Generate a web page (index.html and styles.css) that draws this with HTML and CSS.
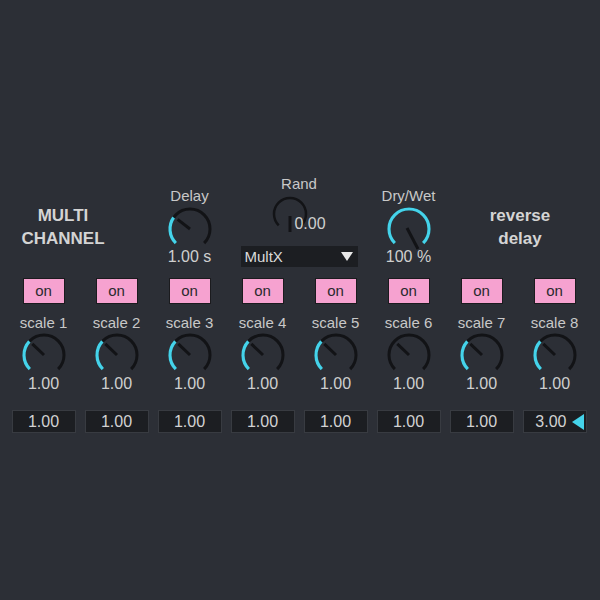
FILE: index.html
```html
<!DOCTYPE html>
<html>
<head>
	<meta charset="UTF-8">
	<title>Multi Channel Reverse Delay</title>
	<link rel="stylesheet" href="styles.css">
</head>
<body>
	<div id="device">
		<div class="top">
			<div class="title multi">MULTI<br>CHANNEL</div>
			<div class="ctl">
				<span class="lbl">Delay</span>
				<svg class="knob" width="46" height="46" viewBox="0 0 46 46">
					<path class="track" d="M8.86 37.14 A20 20 0 1 1 37.14 37.14"/>
					<path class="val" d="M8.86 37.14 A20 20 0 0 1 6.62 11.53"/>
					<line class="needle" x1="23" y1="23" x2="10.6" y2="13.4"/>
				</svg>
				<span class="num">1.00 s</span>
			</div>
			<div class="rand">
				<span class="lbl">Rand</span>
				<div class="randrow">
					<svg class="small" width="36" height="36" viewBox="0 0 36 36">
						<path class="track thin" d="M6.7 29.3 A16 16 0 1 1 29.3 29.3"/>
						<line class="needle" x1="18" y1="20" x2="18" y2="36"/>
					</svg>
					<span class="num">0.00</span>
				</div>
				<div class="menu"><span>MultX</span><i class="down"></i></div>
			</div>
			<div class="ctl">
				<span class="lbl">Dry/Wet</span>
				<svg class="knob" width="46" height="46" viewBox="0 0 46 46">
					<path class="track" d="M8.86 37.14 A20 20 0 1 1 37.14 37.14"/>
					<path class="val" d="M8.86 37.14 A20 20 0 1 1 37.14 37.14"/>
					<line class="needle" x1="21" y1="22" x2="32" y2="43"/>
				</svg>
				<span class="num">100 %</span>
			</div>
			<div class="title reverse">reverse<br>delay</div>
		</div>

		<div class="channels">
			<div class="ch">
				<span class="btn">on</span>
				<span class="lbl">scale 1</span>
				<svg class="knob" width="46" height="46" viewBox="0 0 46 46">
					<path class="track" d="M8.86 37.14 A20 20 0 1 1 37.14 37.14"/>
					<path class="val" d="M8.86 37.14 A20 20 0 0 1 8.36 9.36"/>
					<line class="needle" x1="23" y1="23" x2="11.3" y2="11.9"/>
				</svg>
				<span class="num">1.00</span>
				<span class="box">1.00</span>
			</div>
			<div class="ch">
				<span class="btn">on</span>
				<span class="lbl">scale 2</span>
				<svg class="knob" width="46" height="46" viewBox="0 0 46 46">
					<path class="track" d="M8.86 37.14 A20 20 0 1 1 37.14 37.14"/>
					<path class="val" d="M8.86 37.14 A20 20 0 0 1 8.36 9.36"/>
					<line class="needle" x1="23" y1="23" x2="11.3" y2="11.9"/>
				</svg>
				<span class="num">1.00</span>
				<span class="box">1.00</span>
			</div>
			<div class="ch">
				<span class="btn">on</span>
				<span class="lbl">scale 3</span>
				<svg class="knob" width="46" height="46" viewBox="0 0 46 46">
					<path class="track" d="M8.86 37.14 A20 20 0 1 1 37.14 37.14"/>
					<path class="val" d="M8.86 37.14 A20 20 0 0 1 8.36 9.36"/>
					<line class="needle" x1="23" y1="23" x2="11.3" y2="11.9"/>
				</svg>
				<span class="num">1.00</span>
				<span class="box">1.00</span>
			</div>
			<div class="ch">
				<span class="btn">on</span>
				<span class="lbl">scale 4</span>
				<svg class="knob" width="46" height="46" viewBox="0 0 46 46">
					<path class="track" d="M8.86 37.14 A20 20 0 1 1 37.14 37.14"/>
					<path class="val" d="M8.86 37.14 A20 20 0 0 1 8.36 9.36"/>
					<line class="needle" x1="23" y1="23" x2="11.3" y2="11.9"/>
				</svg>
				<span class="num">1.00</span>
				<span class="box">1.00</span>
			</div>
			<div class="ch">
				<span class="btn">on</span>
				<span class="lbl">scale 5</span>
				<svg class="knob" width="46" height="46" viewBox="0 0 46 46">
					<path class="track" d="M8.86 37.14 A20 20 0 1 1 37.14 37.14"/>
					<path class="val" d="M8.86 37.14 A20 20 0 0 1 8.36 9.36"/>
					<line class="needle" x1="23" y1="23" x2="11.3" y2="11.9"/>
				</svg>
				<span class="num">1.00</span>
				<span class="box">1.00</span>
			</div>
			<div class="ch">
				<span class="btn">on</span>
				<span class="lbl">scale 6</span>
				<svg class="knob" width="46" height="46" viewBox="0 0 46 46">
					<path class="track" d="M8.86 37.14 A20 20 0 1 1 37.14 37.14"/>
					<line class="needle" x1="23" y1="23" x2="11.3" y2="11.9"/>
				</svg>
				<span class="num">1.00</span>
				<span class="box">1.00</span>
			</div>
			<div class="ch">
				<span class="btn">on</span>
				<span class="lbl">scale 7</span>
				<svg class="knob" width="46" height="46" viewBox="0 0 46 46">
					<path class="track" d="M8.86 37.14 A20 20 0 1 1 37.14 37.14"/>
					<path class="val" d="M8.86 37.14 A20 20 0 0 1 8.36 9.36"/>
					<line class="needle" x1="23" y1="23" x2="11.3" y2="11.9"/>
				</svg>
				<span class="num">1.00</span>
				<span class="box">1.00</span>
			</div>
			<div class="ch">
				<span class="btn">on</span>
				<span class="lbl">scale 8</span>
				<svg class="knob" width="46" height="46" viewBox="0 0 46 46">
					<path class="track" d="M8.86 37.14 A20 20 0 1 1 37.14 37.14"/>
					<path class="val" d="M8.86 37.14 A20 20 0 0 1 8.36 9.36"/>
					<line class="needle" x1="23" y1="23" x2="11.3" y2="11.9"/>
				</svg>
				<span class="num">1.00</span>
				<span class="box last">3.00<i class="left"></i></span>
			</div>
		</div>
	</div>
</body>
</html>
```

FILE: styles.css
```css
*{margin:0;padding:0;}
html,body{
	background:#2c2f36;
}
body{
	width:600px;
	height:600px;
	font-family:"Liberation Sans",Arial,sans-serif;
	color:#c8c8c8;
}
#device{
	padding:175px 0 0 7px;
}
.top,.channels{
	display:grid;
	grid-template-columns:repeat(8,73px);
	align-items:start;
}
.title{
	font-size:17px;
	line-height:23px;
	text-align:center;
	color:#d4d4d4;
	padding-top:29px;
}
.multi{
	grid-column:span 2;
	font-weight:bold;
	padding-right:34px;
}
.reverse{
	grid-column:span 2;
	font-weight:bold;
	padding-left:4px;
}
.lbl{
	font-size:15px;
	line-height:18px;
}
.num{
	font-size:16px;
	line-height:18px;
	color:#cfcfcf;
}
.ctl,.ch,.rand{
	display:flex;
	flex-direction:column;
	align-items:center;
}
.ctl{
	padding-top:12px;
}
.ctl .knob{
	margin-top:1px;
}
.ctl .num{
	margin-top:-4px;
}
.knob,.small{
	display:block;
	fill:none;
}
.track{
	stroke:#121316;
	stroke-width:3;
}
.track.thin{
	stroke-width:2.5;
}
.val{
	stroke:#45d3ea;
	stroke-width:3.2;
}
.needle{
	stroke:#121316;
	stroke-width:3;
}

/* rand + menu */
.rand{
	grid-column:span 2;
}
.randrow{
	display:flex;
	align-items:flex-start;
	margin-top:3px;
}
.randrow .num{
	margin:19px 0 0 -14px;
}
.menu{
	width:117px;
	height:21px;
	margin-top:13px;
	background:#1c1e22;
	display:flex;
	align-items:center;
	justify-content:space-between;
	padding:0 5px 0 4px;
	box-sizing:border-box;
	font-size:15px;
	color:#dadada;
}
.down{
	width:0;
	height:0;
	border-left:6px solid transparent;
	border-right:6px solid transparent;
	border-top:9px solid #e8e8e8;
}

/* channel strips */
.channels{
	margin-top:11px;
}
.btn{
	width:42px;
	height:26px;
	box-sizing:border-box;
	background:#f6a2d0;
	border:1.5px solid #1b1b1e;
	color:#2a2a2e;
	font-size:15px;
	line-height:23px;
	text-align:center;
}
.ch .lbl{
	margin-top:10px;
}
.ch .num{
	margin-top:-3px;
}
.box{
	width:64px;
	height:23px;
	margin-top:17px;
	box-sizing:border-box;
	background:#1c1e22;
	border:1px solid #383b41;
	font-size:16px;
	line-height:21px;
	text-align:center;
	color:#d2d2d2;
}
.box.last{
	display:flex;
	align-items:center;
	justify-content:flex-end;
	gap:5px;
	padding-right:2px;
}
.left{
	width:0;
	height:0;
	border-top:8px solid transparent;
	border-bottom:8px solid transparent;
	border-right:12px solid #45d3ea;
}
```
